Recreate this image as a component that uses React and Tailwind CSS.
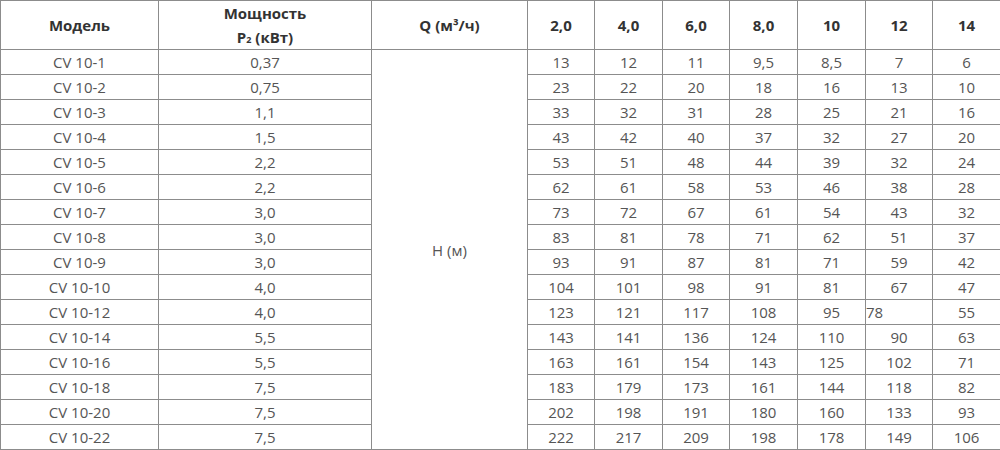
import React from "react";

const rows = [
  ["CV 10-1", "0,37", ["13", "12", "11", "9,5", "8,5", "7", "6"]],
  ["CV 10-2", "0,75", ["23", "22", "20", "18", "16", "13", "10"]],
  ["CV 10-3", "1,1", ["33", "32", "31", "28", "25", "21", "16"]],
  ["CV 10-4", "1,5", ["43", "42", "40", "37", "32", "27", "20"]],
  ["CV 10-5", "2,2", ["53", "51", "48", "44", "39", "32", "24"]],
  ["CV 10-6", "2,2", ["62", "61", "58", "53", "46", "38", "28"]],
  ["CV 10-7", "3,0", ["73", "72", "67", "61", "54", "43", "32"]],
  ["CV 10-8", "3,0", ["83", "81", "78", "71", "62", "51", "37"]],
  ["CV 10-9", "3,0", ["93", "91", "87", "81", "71", "59", "42"]],
  ["CV 10-10", "4,0", ["104", "101", "98", "91", "81", "67", "47"]],
  ["CV 10-12", "4,0", ["123", "121", "117", "108", "95", "78", "55"]],
  ["CV 10-14", "5,5", ["143", "141", "136", "124", "110", "90", "63"]],
  ["CV 10-16", "5,5", ["163", "161", "154", "143", "125", "102", "71"]],
  ["CV 10-18", "7,5", ["183", "179", "173", "161", "144", "118", "82"]],
  ["CV 10-20", "7,5", ["202", "198", "191", "180", "160", "133", "93"]],
  ["CV 10-22", "7,5", ["222", "217", "209", "198", "178", "149", "106"]],
];

const q = ["2,0", "4,0", "6,0", "8,0", "10", "12", "14"];
const widths = [158, 213, 156, 67, 68, 67, 68, 68, 67, 68];

export default function App() {
  return (
    <div className="w-[1000px] h-[450px] bg-white overflow-hidden" style={{ fontFamily: '"Open Sans", sans-serif' }}>
      <table className="table-fixed border-collapse w-[1000px] text-[15px] leading-[24px]">
        <colgroup>
          {widths.map((w, i) => (
            <col key={i} style={{ width: w }} />
          ))}
        </colgroup>
        <thead>
          <tr className="h-[49px]">
            <th className="border border-[#8c8c8c] font-bold text-[#333] p-0 text-center">Модель</th>
            <th className="border border-[#8c8c8c] font-bold text-[#333] p-0 text-center">
              Мощность
              <br />
              P<span className="text-[9px] leading-none">2</span> (кВт)
            </th>
            <th className="border border-[#8c8c8c] font-bold text-[#333] p-0 text-center">Q (м³/ч)</th>
            {q.map((v) => (
              <th key={v} className="border border-[#8c8c8c] font-bold text-[#333] p-0 text-center">
                {v}
              </th>
            ))}
          </tr>
        </thead>
        <tbody>
          {rows.map((r, i) => (
            <tr key={r[0]} className="h-[25px]">
              <td className="border border-[#8c8c8c] text-[#555] p-0 text-center">{r[0]}</td>
              <td className="border border-[#8c8c8c] text-[#555] p-0 text-center">{r[1]}</td>
              {i === 0 && (
                <td rowSpan={16} className="border border-[#8c8c8c] text-[#555] p-0 text-center">
                  Н (м)
                </td>
              )}
              {r[2].map((v, j) => (
                <td
                  key={j}
                  className={
                    i === 10 && j === 5
                      ? "border border-[#8c8c8c] text-[#555] p-0 text-left"
                      : "border border-[#8c8c8c] text-[#555] p-0 text-center"
                  }
                >
                  {v}
                </td>
              ))}
            </tr>
          ))}
        </tbody>
      </table>
    </div>
  );
}
